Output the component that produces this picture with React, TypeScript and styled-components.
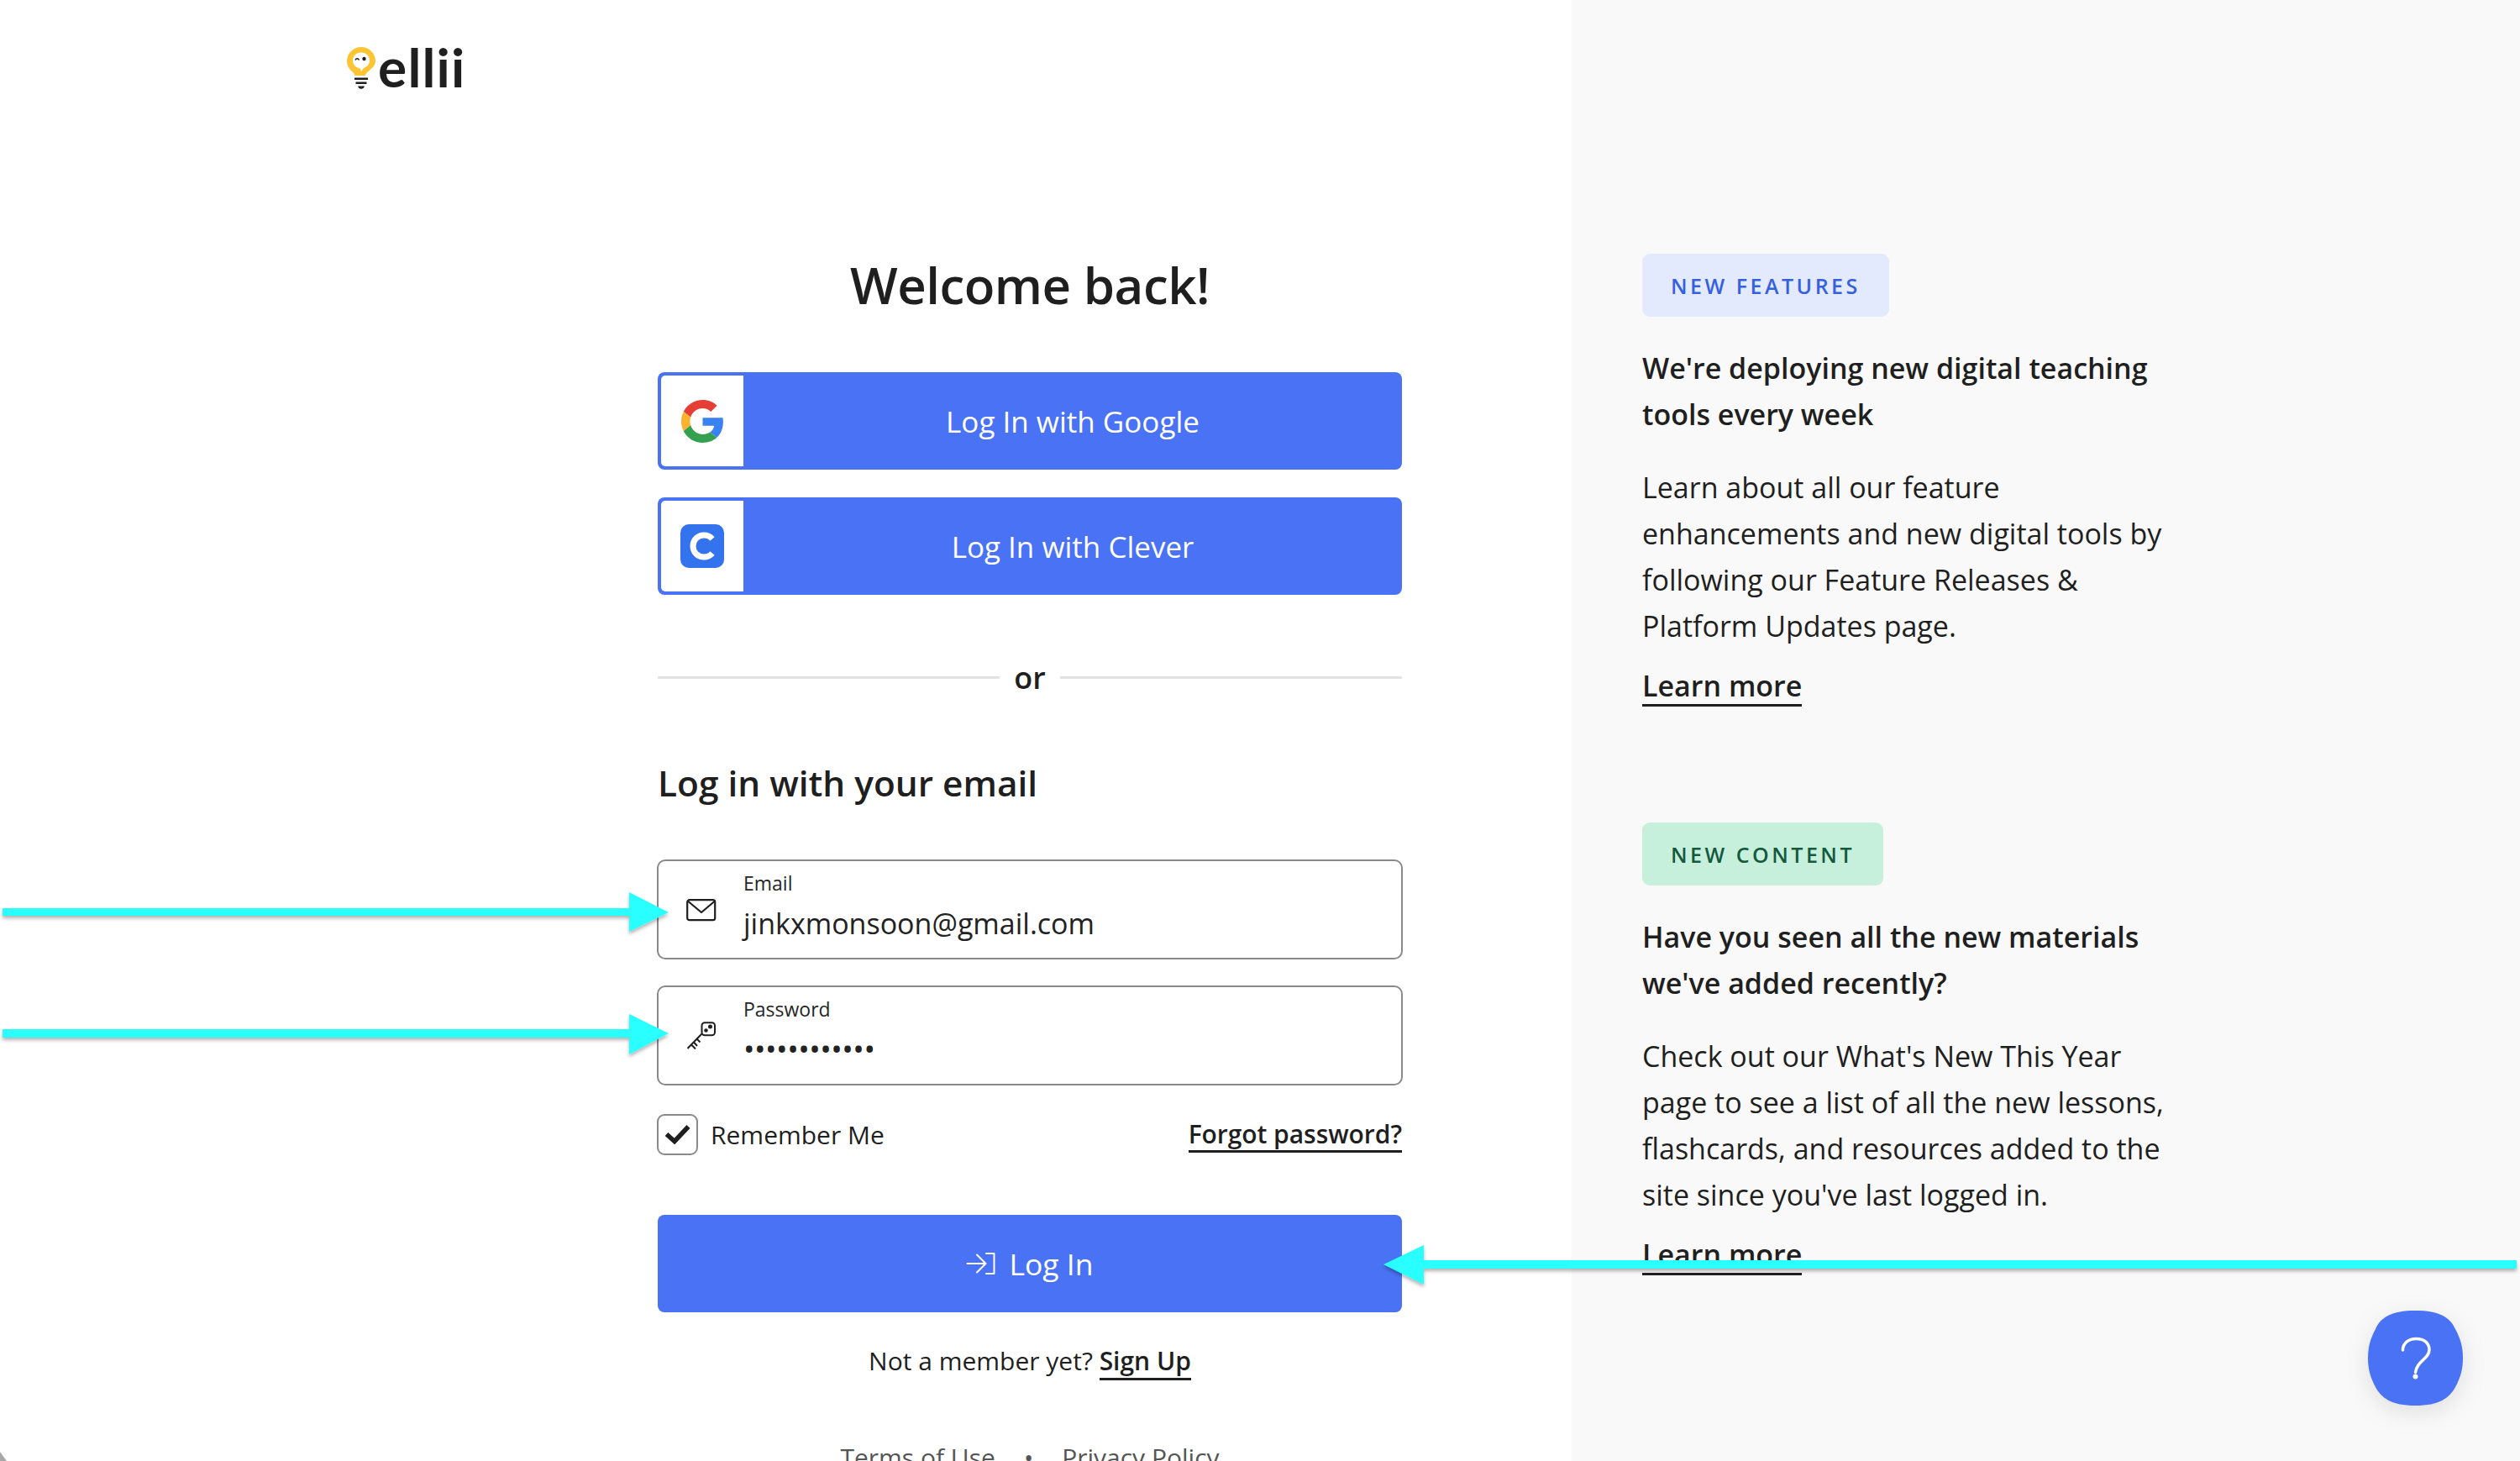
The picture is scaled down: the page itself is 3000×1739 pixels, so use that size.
import React from "react";
import styled, { createGlobalStyle } from "styled-components";

const Global = createGlobalStyle`
  html, body { margin: 0; padding: 0; background: #fff; }
  body { font-family: "Open Sans", "Noto Sans", sans-serif; color: #1f1f1f; }
  * { box-sizing: border-box; }
`;

const Page = styled.div`
  position: relative;
  display: grid;
  grid-template-columns: 1871px 1129px;
  width: 3000px;
  height: 1739px;
  overflow: hidden;
`;

const LeftPanel = styled.main`
  background: #fff;
  display: flex;
  flex-direction: column;
  padding: 39px 202px 0 412px;
`;

const Logo = styled.div`
  display: flex;
  align-items: flex-start;
  height: 80px;
  gap: 2px;
`;

const LogoWord = styled.span`
  font-family: "Lato", sans-serif;
  font-weight: 700;
  font-size: 64px;
  line-height: 82px;
  color: #1f1f1f;
  letter-spacing: 1.2px;
`;

const Form = styled.div`
  display: flex;
  flex-direction: column;
  margin: 180px 0 0 371px;
  width: 886px;
`;

const Title = styled.h1`
  margin: 0 0 64px;
  font-size: 60px;
  line-height: 80px;
  font-weight: 600;
  text-align: center;
  letter-spacing: -0.5px;
`;

const SocialButton = styled.button`
  display: flex;
  align-items: stretch;
  width: 100%;
  height: 116px;
  padding: 4px 0 4px 4px;
  margin-bottom: 33px;
  border: 0;
  border-radius: 8px;
  background: #4a72f5;
  color: #fff;
  font: 500 35px "Open Sans", sans-serif;
`;

const SocialIcon = styled.span`
  flex: 0 0 98px;
  display: flex;
  align-items: center;
  justify-content: center;
  background: #fff;
  border-radius: 5px 0 0 5px;
`;

const SocialLabel = styled.span`
  flex: 1;
  align-self: center;
  text-align: center;
`;

const Divider = styled.div`
  display: flex;
  align-items: center;
  gap: 17px;
  margin: 30px 0 0;
  height: 70px;
  font-size: 36px;
  font-weight: 600;
  &::before, &::after { content: ""; flex: 1; height: 3px; background: #e3e3e3; }
`;

const SubTitle = styled.h2`
  margin: 63px 0 63px;
  font-size: 42.4px;
  line-height: 56px;
  font-weight: 600;
`;

const Field = styled.div`
  display: flex;
  align-items: center;
  height: 119px;
  width: 888px;
  margin: 0 0 31px -1px;
  padding-left: 33px;
  border: 2px solid #8a8a8a;
  border-radius: 10px;
  background: #fff;
`;

const FieldIcon = styled.span`
  flex: 0 0 68px;
  display: flex;
  margin-top: 2px;
`;

const FieldBody = styled.div`
  display: flex;
  flex-direction: column;
  margin-bottom: 6px;
`;

const FieldLabel = styled.label`
  font-size: 23px;
  line-height: 32px;
  font-weight: 500;
  color: #262626;
  margin-bottom: 6px;
`;

const FieldValue = styled.span`
  font-size: 34px;
  line-height: 52px;
  color: #222;
`;

const Dots = styled.span`
  font-size: 36px;
  line-height: 52px;
  letter-spacing: -0.5px;
  color: #222;
`;

const OptionsRow = styled.div`
  display: flex;
  align-items: center;
  justify-content: space-between;
  height: 50px;
  margin-top: 2px;
`;

const CheckLabel = styled.label`
  display: flex;
  align-items: center;
  gap: 15px;
  font-size: 30px;
  margin-left: -1px;
`;

const CheckBox = styled.span`
  display: flex;
  align-items: center;
  justify-content: center;
  width: 49px;
  height: 49px;
  border: 2px solid #8a8a8a;
  border-radius: 9px;
`;

const StrongLink = styled.a`
  font-size: 30px;
  line-height: 38px;
  font-weight: 600;
  color: #1f1f1f;
  border-bottom: 3px solid #1f1f1f;
`;

const ForgotLink = styled(StrongLink)`
  margin-top: 3px;
  letter-spacing: -0.05px;
`;

const LoginButton = styled.button`
  display: flex;
  align-items: center;
  justify-content: center;
  gap: 15px;
  width: 100%;
  height: 116px;
  margin-top: 71px;
  border: 0;
  border-radius: 8px;
  background: #4a72f5;
  color: #fff;
  font: 500 35.5px "Open Sans", sans-serif;
`;

const SignUpLine = styled.p`
  margin: 36px 0 0;
  text-align: center;
  font-size: 30px;
  line-height: 44px;
`;

const Footer = styled.div`
  display: flex;
  justify-content: center;
  gap: 34px;
  margin-top: 73px;
  font-size: 30px;
  line-height: 40px;
  color: #555;
`;

const RightPanel = styled.aside`
  background: #f9f9f9;
  padding: 302px 0 0 84px;
  display: flex;
  flex-direction: column;
`;

const Article = styled.section`
  display: flex;
  flex-direction: column;
  align-items: flex-start;
  width: 640px;
  margin-bottom: 138px;
`;

const Chip = styled.span<{ $bg: string; $fg: string }>`
  display: inline-flex;
  align-items: center;
  height: 75px;
  padding: 0 34px;
  border-radius: 9px;
  background: ${p => p.$bg};
  color: ${p => p.$fg};
  font-size: 25px;
  font-weight: 600;
  letter-spacing: 3.5px;
`;

const ArticleTitle = styled.h3`
  margin: 34px 0 32px;
  font-size: 34px;
  line-height: 55px;
  font-weight: 600;
`;

const ArticleText = styled.p`
  margin: 0 0 21px;
  font-size: 34px;
  line-height: 55px;
`;

const LearnMore = styled.a`
  font-size: 34px;
  line-height: 44px;
  font-weight: 600;
  color: #1f1f1f;
  border-bottom: 3px solid #1f1f1f;
`;

const HelpButton = styled.button`
  position: absolute;
  left: 2819px;
  top: 1560px;
  width: 113px;
  height: 113px;
  padding: 0;
  border: 0;
  background: none;
  filter: drop-shadow(0 8px 14px rgba(0, 0, 0, 0.1));
`;

const AnnotationLayer = styled.svg`
  position: absolute;
  inset: 0;
  pointer-events: none;
`;

const LightBulb = () => (
  <svg width="36" height="52" viewBox="0 0 36 52" style={{ marginTop: 16 }}>
    <path d="M18 1C8.6 1 1 8.6 1 17.5c0 6 3 10 7 13.5 1.5 1.4 2 2.4 2.6 4h12c1-2.400 2.400-3.600 4.400-5.500C31.500 25.500 35 22.500 35 17.500 35 8.600 27.400 1 18 1Z" fill="#fdc533" />
    <path d="M18 7.500c-5.800 0-10 4.200-10 9.500s4.200 9 9 9.500l.5 4 3.500-4.500c4.500-1.500 7-5 7-9 0-5.300-4.200-9.500-10-9.500Z" fill="#fff" />
    <circle cx="21.500" cy="15" r="2.200" fill="#1f1f1f" />
    <path d="M11 16.500c1-2.400 3.400-2.400 4.500 0" stroke="#1f1f1f" strokeWidth="1.600" fill="none" />
    <path d="M10 37.500h16v2.500H10zM11.500 42.500h13V45h-13zM14 47.500h8c-.8 2.200-2 3.300-4 3.300s-3.200-1.100-4-3.300Z" fill="#1f1f1f" />
  </svg>
);

const GoogleMark = () => (
  <svg width="51" height="51" viewBox="0 0 48 48">
    <path fill="#E53E35" d="M24 9.500c3.540 0 6.710 1.220 9.210 3.600l6.850-6.850C35.900 2.380 30.470 0 24 0 14.620 0 6.510 5.380 2.560 13.220l7.980 6.190C12.430 13.720 17.740 9.500 24 9.500z" />
    <path fill="#3A82F1" d="M46.980 24.550c0-1.570-.15-3.090-.38-4.550H24v9.020h12.940c-.58 2.960-2.260 5.480-4.780 7.180l7.730 6c4.510-4.180 7.090-10.360 7.090-17.650z" />
    <path fill="#FBB32F" d="M10.530 28.590c-.48-1.450-.76-2.990-.76-4.590s.27-3.140.76-4.590l-7.980-6.190C.92 16.460 0 20.120 0 24c0 3.880.92 7.540 2.560 10.780l7.970-6.190z" />
    <path fill="#34A050" d="M24 48c6.480 0 11.930-2.130 15.890-5.810l-7.730-6c-2.150 1.450-4.920 2.300-8.160 2.300-6.260 0-11.570-4.220-13.470-9.910l-7.980 6.190C6.510 42.620 14.620 48 24 48z" />
  </svg>
);

const CleverMark = () => (
  <svg width="52" height="52" viewBox="0 0 52 52">
    <rect width="52" height="52" rx="10" fill="#3373ee" />
    <path d="M38 17.500C35.500 14.500 32 13 28 13c-7.500 0-13 5.600-13 13s5.500 13 13 13c4 0 7.500-1.500 10-4.500" fill="none" stroke="#fff" strokeWidth="7" />
  </svg>
);

const MailIcon = () => (
  <svg width="36" height="27" viewBox="0 0 36 27" fill="none" stroke="#1f1f1f" strokeWidth="2.200" strokeLinejoin="round">
    <rect x="1.200" y="1.200" width="33" height="24" rx="2.500" />
    <path d="M1.800 2.500 18 16 34 2.500" />
  </svg>
);

const KeyIcon = () => (
  <svg width="36" height="36" viewBox="0 0 36 36" fill="none" stroke="#1f1f1f" strokeWidth="2">
    <rect x="18.500" y="1.200" width="15.500" height="15" rx="3.500" />
    <circle cx="23.500" cy="10.500" r="1.300" fill="#1f1f1f" />
    <circle cx="28.500" cy="6" r="1.500" fill="#1f1f1f" />
    <path d="M18.500 14.500 1.500 32M6 27.500l5 5M9 24.500l4 4.500M13 21l3.500 3.500" />
  </svg>
);

const CheckMark = () => (
  <svg width="31" height="24" viewBox="0 0 31 24">
    <path d="M2.500 12 12 20.500 28.500 3" fill="none" stroke="#1f1f1f" strokeWidth="5.500" />
  </svg>
);

const LoginIcon = () => (
  <svg width="36" height="28" viewBox="0 0 36 28" fill="none" stroke="#fff" strokeWidth="2" strokeLinecap="round" strokeLinejoin="round">
    <path d="M1.500 14H23M13 3.500 23.500 14 13 24.500M24 2h9.500v24H24" />
  </svg>
);

const HelpMark = () => (
  <svg width="113" height="113" viewBox="0 0 113 113">
    <path d="M56.500 0C85 0 98 8 104 22c6 11 9 21 9 34.500S110 80 104 91c-7 13-19 22-47.500 22S16 104 9 91C3 80 0 70 0 56.500S3 33 9 22C15 8 28 0 56.500 0Z" fill="#4a72f5" />
    <path d="M41.500 47c0-8.500 7-13.500 16-13.500 9.500 0 15.500 5.500 15.500 13 0 11-15 13.500-16.500 27" fill="none" stroke="#fff" strokeWidth="3.500" strokeLinecap="round" />
    <circle cx="56.500" cy="78.500" r="3" fill="#fff" />
  </svg>
);

const Annotations = () => (
  <AnnotationLayer width="3000" height="1739" viewBox="0 0 3000 1739">
    <defs>
      <filter id="arrowShadow" x="-5%" y="-50%" width="110%" height="200%">
        <feDropShadow dx="0" dy="3" stdDeviation="2" floodColor="#000" floodOpacity="0.3" />
      </filter>
    </defs>
    <g fill="#29ffff" filter="url(#arrowShadow)">
      <polygon points="3,1081 749,1081 749,1062 796,1086 749,1109 749,1090 3,1090" />
      <polygon points="3,1225 749,1225 749,1207 796,1230 749,1255 749,1235 3,1235" />
      <polygon points="2996,1500 1695,1500 1695,1482 1647,1505 1695,1529 1695,1510 2996,1510" />
    </g>
    <polygon points="0,1728 8,1739 0,1739" fill="#a8a8a8" />
  </AnnotationLayer>
);

export default function App() {
  return (
    <>
      <Global />
      <Page>
        <LeftPanel>
          <Logo>
            <LightBulb />
            <LogoWord>ellii</LogoWord>
          </Logo>
          <Form>
            <Title>Welcome back!</Title>
            <SocialButton>
              <SocialIcon><GoogleMark /></SocialIcon>
              <SocialLabel>Log In with Google</SocialLabel>
            </SocialButton>
            <SocialButton>
              <SocialIcon><CleverMark /></SocialIcon>
              <SocialLabel>Log In with Clever</SocialLabel>
            </SocialButton>
            <Divider>or</Divider>
            <SubTitle>Log in with your email</SubTitle>
            <Field>
              <FieldIcon><MailIcon /></FieldIcon>
              <FieldBody>
                <FieldLabel>Email</FieldLabel>
                <FieldValue>jinkxmonsoon@gmail.com</FieldValue>
              </FieldBody>
            </Field>
            <Field>
              <FieldIcon><KeyIcon /></FieldIcon>
              <FieldBody>
                <FieldLabel>Password</FieldLabel>
                <Dots>••••••••••••</Dots>
              </FieldBody>
            </Field>
            <OptionsRow>
              <CheckLabel>
                <CheckBox><CheckMark /></CheckBox>
                Remember Me
              </CheckLabel>
              <ForgotLink>Forgot password?</ForgotLink>
            </OptionsRow>
            <LoginButton><LoginIcon />Log In</LoginButton>
            <SignUpLine>Not a member yet? <StrongLink>Sign Up</StrongLink></SignUpLine>
            <Footer>
              <span>Terms of Use</span>
              <span>•</span>
              <span>Privacy Policy</span>
            </Footer>
          </Form>
        </LeftPanel>
        <RightPanel>
          <Article>
            <Chip $bg="#e3eafd" $fg="#3560e0">NEW FEATURES</Chip>
            <ArticleTitle>We're deploying new digital teaching tools every week</ArticleTitle>
            <ArticleText>Learn about all our feature enhancements and new digital tools by following our Feature Releases &amp; Platform Updates page.</ArticleText>
            <LearnMore>Learn more</LearnMore>
          </Article>
          <Article>
            <Chip $bg="#c6f0dc" $fg="#14593d">NEW CONTENT</Chip>
            <ArticleTitle>Have you seen all the new materials we've added recently?</ArticleTitle>
            <ArticleText>Check out our What's New This Year page to see a list of all the new lessons, flashcards, and resources added to the site since you've last logged in.</ArticleText>
            <LearnMore>Learn more</LearnMore>
          </Article>
        </RightPanel>
        <Annotations />
        <HelpButton aria-label="Help"><HelpMark /></HelpButton>
      </Page>
    </>
  );
}
